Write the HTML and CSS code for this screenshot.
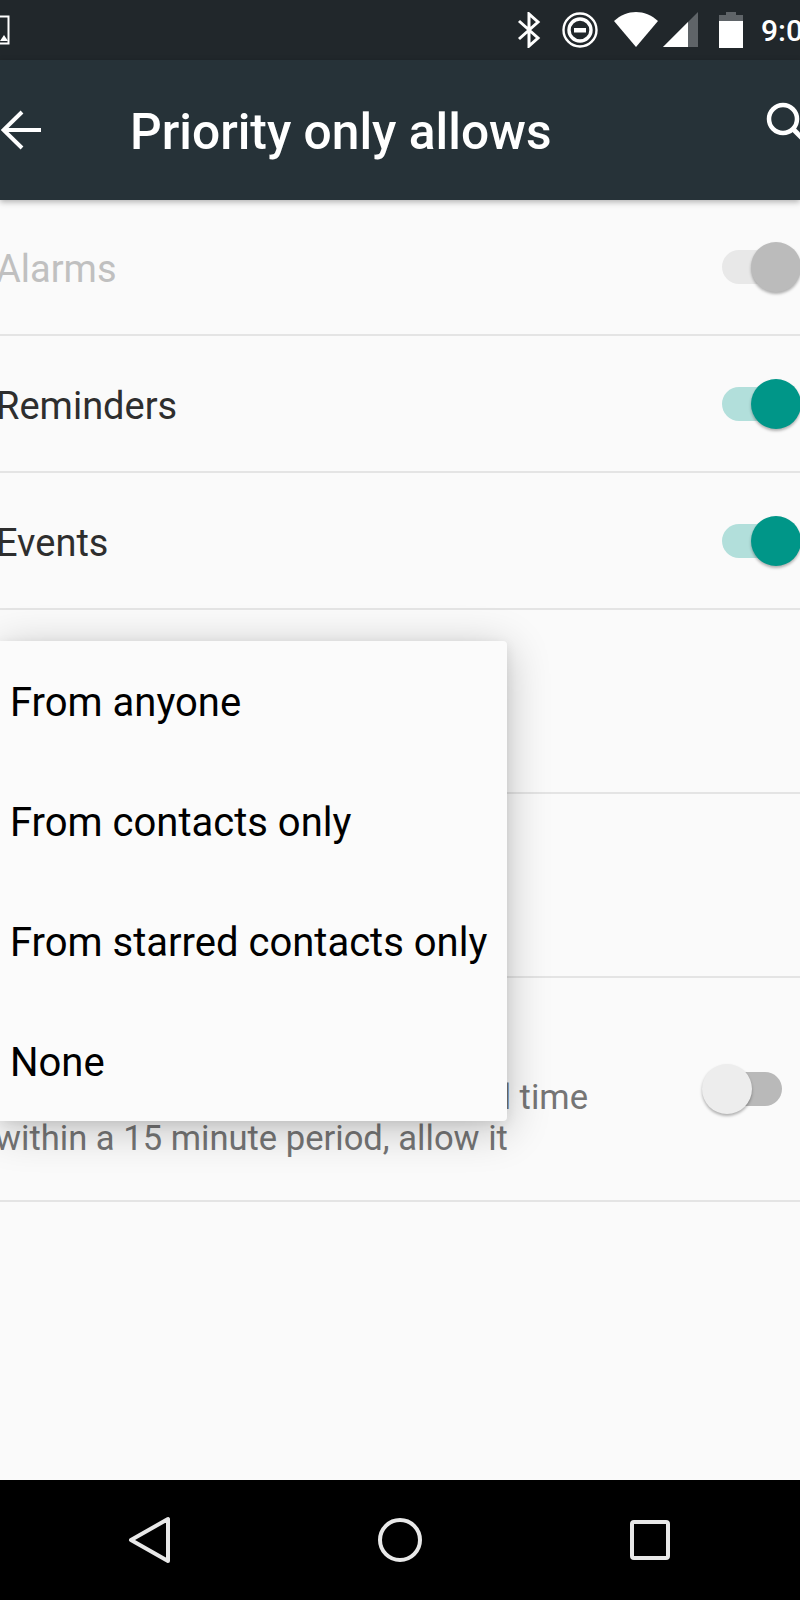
FILE: index.html
```html
<!DOCTYPE html>
<html lang="en">
<head>
<meta charset="utf-8">
<title>Priority only allows</title>
<link rel="stylesheet" href="styles.css">
</head>
<body>
<div class="screen">
  <header class="statusbar">
    <svg class="sb-left" width="10" height="30" viewBox="0 0 10 30"><path d="M-4 1.5H8.5V28.5H-4" fill="none" stroke="#fff" stroke-width="2"/><path d="M0 26L4 20L8 26Z" fill="#fff"/></svg>
    <div class="sb-right">
      <svg class="ic-bt" width="24" height="36" viewBox="0 0 24 36"><path d="M2 9L21 26L12 34V2L21 10L2 27" fill="none" stroke="#fff" stroke-width="3"/></svg>
      <svg class="ic-dnd" width="36" height="36" viewBox="0 0 36 36"><circle cx="18" cy="18" r="16.5" fill="none" stroke="#fff" stroke-width="2.4"/><circle cx="18" cy="18" r="11" fill="none" stroke="#fff" stroke-width="3.4"/><rect x="12" y="16" width="12" height="4.5" fill="#fff"/></svg>
      <svg class="ic-wifi" width="44" height="36" viewBox="0 0 44 36"><path d="M0 9C13 -3 31 -3 44 9L22 35Z" fill="#fff"/></svg>
      <svg class="ic-sig" width="36" height="36" viewBox="0 0 36 36"><path d="M0 35L35 0V35Z" fill="#5f6468"/><path d="M0 35L25 10V35Z" fill="#fff"/></svg>
      <svg class="ic-bat" width="24" height="36" viewBox="0 0 24 36"><path d="M7 0H17V3H24V9H0V3H7Z" fill="#5f6468"/><rect y="9" width="24" height="27" fill="#fff"/></svg>
      <span class="clock">9:00</span>
    </div>
  </header>

  <div class="toolbar">
    <svg class="ic-back" width="40" height="40" viewBox="0 0 40 40"><path d="M21 2L2.500 20L21 38M2 20H40" fill="none" stroke="#fff" stroke-width="4"/></svg>
    <h1 class="title">Priority only allows</h1>
    <svg class="ic-search" width="40" height="40" viewBox="0 0 40 40"><circle cx="17" cy="17" r="14" fill="none" stroke="#fff" stroke-width="4.500"/><path d="M27 27L38 38" stroke="#fff" stroke-width="5"/></svg>
  </div>

  <main class="list">
    <div class="row row-first">
      <span class="row-title disabled">Alarms</span>
      <span class="switch sw-disabled"><span class="thumb"></span></span>
    </div>
    <div class="row">
      <span class="row-title">Reminders</span>
      <span class="switch sw-on"><span class="thumb"></span></span>
    </div>
    <div class="row">
      <span class="row-title">Events</span>
      <span class="switch sw-on"><span class="thumb"></span></span>
    </div>
    <div class="row row-tall"></div>
    <div class="row row-tall"></div>
    <div class="row row-repeat">
      <p class="row-desc">If the same person calls a second time within a 15 minute period, allow it</p>
      <span class="switch sw-off"><span class="thumb"></span></span>
    </div>
  </main>

  <div class="menu">
    <div class="menu-item">From anyone</div>
    <div class="menu-item">From contacts only</div>
    <div class="menu-item">From starred contacts only</div>
    <div class="menu-item">None</div>
  </div>

  <nav class="navbar">
    <svg width="46" height="50" viewBox="0 0 46 50"><path d="M41 4V46L4 25Z" fill="none" stroke="#e8e8e8" stroke-width="4" stroke-linejoin="round"/></svg>
    <svg width="46" height="50" viewBox="0 0 46 50"><circle cx="23" cy="25" r="20" fill="none" stroke="#e8e8e8" stroke-width="4"/></svg>
    <svg width="46" height="50" viewBox="0 0 46 50"><rect x="5" y="7" width="36" height="36" rx="2" fill="none" stroke="#e8e8e8" stroke-width="4"/></svg>
  </nav>
</div>
</body>
</html>
```

FILE: styles.css
```css
* { box-sizing: border-box; }
html, body { margin: 0; padding: 0; }
body { font-family: Roboto, "Liberation Sans", sans-serif; background: #fafafa; }

.screen {
  position: relative;
  width: 800px;
  height: 1600px;
  overflow: hidden;
  display: flex;
  flex-direction: column;
  background: #fafafa;
}

.statusbar {
  height: 60px;
  flex: none;
  display: flex;
  align-items: center;
  justify-content: space-between;
  background: #21272b;
  color: #fff;
}
.sb-right { display: flex; align-items: center; margin-right: -23px; }
.ic-bt { margin-right: 21px; }
.ic-dnd { margin-right: 16px; }
.ic-wifi { margin-right: 5px; }
.ic-sig { margin-right: 20px; }
.ic-bat { margin-right: 18px; }
.clock { font-size: 30px; font-weight: 500; width: 62px; white-space: nowrap; }

.toolbar {
  height: 140px;
  flex: none;
  display: flex;
  align-items: center;
  padding-left: 1px;
  background: #263238;
  box-shadow: 0 2px 6px rgba(0, 0, 0, .3);
  position: relative;
  z-index: 1;
  color: #fff;
}
.ic-back { flex: none; }
.title {
  margin: 4px 0 0 89px;
  font-size: 49.7px;
  font-weight: 500;
  line-height: 60px;
  white-space: nowrap;
  flex: 1;
}
.ic-search { flex: none; margin: -16px -6px 0 0; }

.list { flex: 1; }
.row {
  height: 137px;
  display: flex;
  align-items: center;
  justify-content: space-between;
  border-bottom: 2px solid #e4e4e4;
  padding-right: 18px;
}
.row-first { height: 136px; }
.row-tall { height: 184px; }
.row-repeat { height: 224px; }
.row-title { font-size: 38px; color: #2e2e2e; margin: 4px 0 0 -4px; }
.row-title.disabled { color: #c0c0c0; }
.row-desc {
  margin: 58px 0 0 -5px;
  width: 600px;
  font-size: 34.6px;
  line-height: 41px;
  color: #757575;
}

.switch {
  position: relative;
  flex: none;
  width: 60px;
  height: 34px;
  border-radius: 17px;
}
.thumb {
  position: absolute;
  top: -8px;
  width: 50px;
  height: 50px;
  border-radius: 50%;
  box-shadow: 0 2px 3px rgba(0, 0, 0, .3);
}
.sw-on { background: #b2dfdb; }
.sw-on .thumb { left: 29px; background: #009688; }
.sw-disabled { background: #e8e8e8; }
.sw-disabled .thumb { left: 29px; background: #bbb; }
.sw-off { background: #b9b9b9; }
.sw-off .thumb { left: -20px; background: #ededed; }

.menu {
  position: absolute;
  left: 0;
  top: 641px;
  width: 507px;
  height: 480px;
  background: #fbfbfb;
  border-radius: 0 4px 4px 0;
  box-shadow: 0 8px 44px rgba(0, 0, 0, .24), 0 3px 12px rgba(0, 0, 0, .08);
  z-index: 2;
}
.menu-item {
  height: 120px;
  padding: 2px 0 0 10px;
  display: flex;
  align-items: center;
  font-size: 40px;
  color: #000;
  white-space: nowrap;
}

.navbar {
  height: 120px;
  flex: none;
  display: flex;
  align-items: center;
  justify-content: space-between;
  padding: 0 127px 0 127px;
  background: #000;
}
```
